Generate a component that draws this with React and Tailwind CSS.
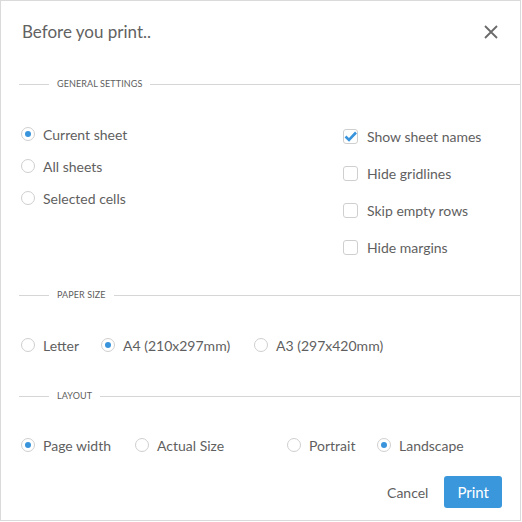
import React, { useState } from 'react';

const font = { fontFamily: 'Lato, "Open Sans", sans-serif' };

const Radio = ({ checked, label, onClick, className = '' }) => (
  <button onClick={onClick} className={`flex items-center gap-[8px] text-[14px] text-[#5f5f5f] ${className}`}>
    <span className="w-[14px] h-[14px] rounded-full border border-[#cfcfcf] bg-white flex items-center justify-center shrink-0">
      {checked && <span className="w-[6px] h-[6px] rounded-full bg-[#3a94dc]"></span>}
    </span>
    <span className="whitespace-nowrap">{label}</span>
  </button>
);

const Check = ({ checked, label, onClick }) => (
  <button onClick={onClick} className="flex items-center gap-[9px] h-[37px] text-[14px] text-[#5f5f5f]">
    <span className="w-[15px] h-[15px] rounded-[3px] border border-[#cfcfcf] bg-white flex items-center justify-center shrink-0">
      {checked && (
        <svg width="13" height="11" viewBox="0 0 13 11">
          <path d="M1.5 5.5 L5 9 L12 1.5" fill="none" stroke="#3a94dc" strokeWidth="2.6" />
        </svg>
      )}
    </span>
    <span className="whitespace-nowrap">{label}</span>
  </button>
);

const SectionTitle = ({ children, className = '' }) => (
  <div className={`flex items-center h-[16px] pl-[18px] ${className}`}>
    <div className="w-[30px] h-px bg-[#d6d6d6]"></div>
    <span className="px-[8px] text-[9px] tracking-[0.1px] text-[#606060] uppercase">{children}</span>
    <div className="flex-1 h-px bg-[#d6d6d6]"></div>
  </div>
);

export default function App() {
  const [range, setRange] = useState('current');
  const [opts, setOpts] = useState({ names: true, grid: false, empty: false, margins: false });
  const [paper, setPaper] = useState('a4');
  const [fit, setFit] = useState('page');
  const [orient, setOrient] = useState('landscape');

  const toggle = (k) => setOpts((o) => ({ ...o, [k]: !o[k] }));

  return (
    <div style={font} className="w-[521px] h-[521px] bg-white border border-[#dadada] flex flex-col">
      <div className="flex items-center justify-between h-[62px] pl-[21px] pr-[22px]">
        <h2 className="text-[17px] text-[#626262]">Before you print..</h2>
        <button className="text-[#6a6a6a]">
          <svg width="14" height="14" viewBox="0 0 14 14">
            <path d="M1 1 L13 13 M13 1 L1 13" stroke="currentColor" strokeWidth="1.8" />
          </svg>
        </button>
      </div>

      <SectionTitle className="mt-[13px]">General settings</SectionTitle>
      <div className="flex mt-[26px]">
        <div className="w-[342px] pl-[20px] flex flex-col">
          <Radio className="h-[32px]" checked={range === 'current'} onClick={() => setRange('current')} label="Current sheet" />
          <Radio className="h-[32px]" checked={range === 'all'} onClick={() => setRange('all')} label="All sheets" />
          <Radio className="h-[32px]" checked={range === 'selected'} onClick={() => setRange('selected')} label="Selected cells" />
        </div>
        <div className="flex flex-col">
          <Check checked={opts.names} onClick={() => toggle('names')} label="Show sheet names" />
          <Check checked={opts.grid} onClick={() => toggle('grid')} label="Hide gridlines" />
          <Check checked={opts.empty} onClick={() => toggle('empty')} label="Skip empty rows" />
          <Check checked={opts.margins} onClick={() => toggle('margins')} label="Hide margins" />
        </div>
      </div>

      <SectionTitle className="mt-[21px]">Paper size</SectionTitle>
      <div className="flex h-[32px] mt-[26px] pl-[20px]">
        <Radio className="w-[80px]" checked={paper === 'letter'} onClick={() => setPaper('letter')} label="Letter" />
        <Radio className="w-[153px]" checked={paper === 'a4'} onClick={() => setPaper('a4')} label="A4 (210x297mm)" />
        <Radio checked={paper === 'a3'} onClick={() => setPaper('a3')} label="A3 (297x420mm)" />
      </div>

      <SectionTitle className="mt-[27px]">Layout</SectionTitle>
      <div className="flex h-[32px] mt-[25px] pl-[20px]">
        <Radio className="w-[114px]" checked={fit === 'page'} onClick={() => setFit('page')} label="Page width" />
        <Radio className="w-[152px]" checked={fit === 'actual'} onClick={() => setFit('actual')} label="Actual Size" />
        <Radio className="w-[90px]" checked={orient === 'portrait'} onClick={() => setOrient('portrait')} label="Portrait" />
        <Radio checked={orient === 'landscape'} onClick={() => setOrient('landscape')} label="Landscape" />
      </div>

      <div className="flex items-center justify-end gap-[16px] mt-[15px] pr-[18px]">
        <button className="text-[14px] text-[#5f5f5f]">Cancel</button>
        <button className="h-[32px] px-[13px] rounded-[3px] bg-[#3a97dc] text-white text-[15px]">Print</button>
      </div>
    </div>
  );
}
